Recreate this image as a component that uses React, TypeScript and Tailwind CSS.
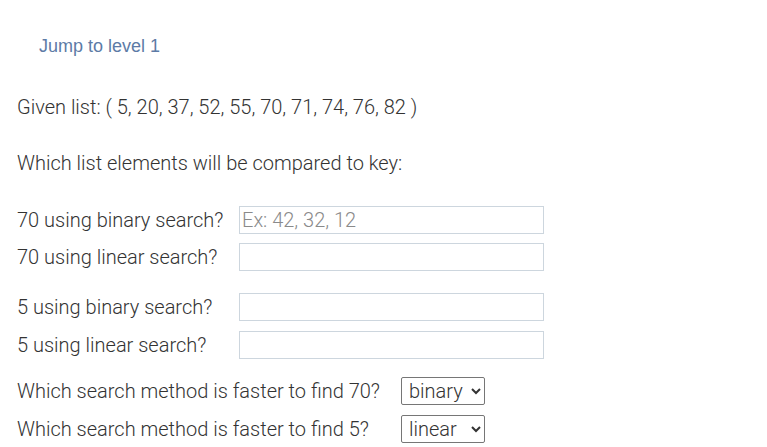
import React from 'react';

const rowsA = ['70 using binary search?', '70 using linear search?'];
const rowsB = ['5 using binary search?', '5 using linear search?'];

function AnswerRow({ label, placeholder }: { label: string; placeholder?: string }) {
  return (
    <div className="flex items-center h-[28px]">
      <span className="w-[222px] shrink-0 whitespace-nowrap">{label}</span>
      <input
        type="text"
        placeholder={placeholder}
        className="w-[305px] h-[28px] border border-[#cdd6de] px-[2px] text-[20px] font-light text-[#333] placeholder:text-[#8a8a8a] outline-none"
      />
    </div>
  );
}

function MethodRow({ label, value }: { label: string; value: string }) {
  return (
    <div className="flex items-center h-[28px]">
      <span className="w-[384px] shrink-0 whitespace-nowrap">{label}</span>
      <select
        defaultValue={value}
        className="w-[84px] h-[28px] border border-[#767676] rounded-[2px] bg-white pl-[3px] text-[20px] font-light text-[#333]"
      >
        <option value="" />
        <option value="binary">binary</option>
        <option value="linear">linear</option>
      </select>
    </div>
  );
}

export default function App() {
  return (
    <div className="w-[767px] h-[447px] bg-white overflow-hidden pl-[17px] text-[20px] font-light text-[#333] font-['Roboto',sans-serif]">
      <div className="pt-[35px] pl-[22px] font-['Liberation_Sans',Arial,sans-serif] font-normal text-[18px] text-[#5d7ba6] leading-[22px]">
        Jump to level 1
      </div>

      <p className="mt-[37px] leading-[26px]">Given list: ( 5, 20, 37, 52, 55, 70, 71, 74, 76, 82 )</p>

      <p className="mt-[30px] leading-[26px]">Which list elements will be compared to key:</p>

      <div className="mt-[30px] flex flex-col gap-[9px]">
        <AnswerRow label={rowsA[0]} placeholder="Ex: 42, 32, 12" />
        <AnswerRow label={rowsA[1]} />
      </div>

      <div className="mt-[22px] flex flex-col gap-[10px]">
        {rowsB.map((l) => (
          <AnswerRow key={l} label={l} />
        ))}
      </div>

      <div className="mt-[18px] flex flex-col gap-[10px]">
        <MethodRow label="Which search method is faster to find 70?" value="binary" />
        <MethodRow label="Which search method is faster to find 5?" value="linear" />
      </div>
    </div>
  );
}
